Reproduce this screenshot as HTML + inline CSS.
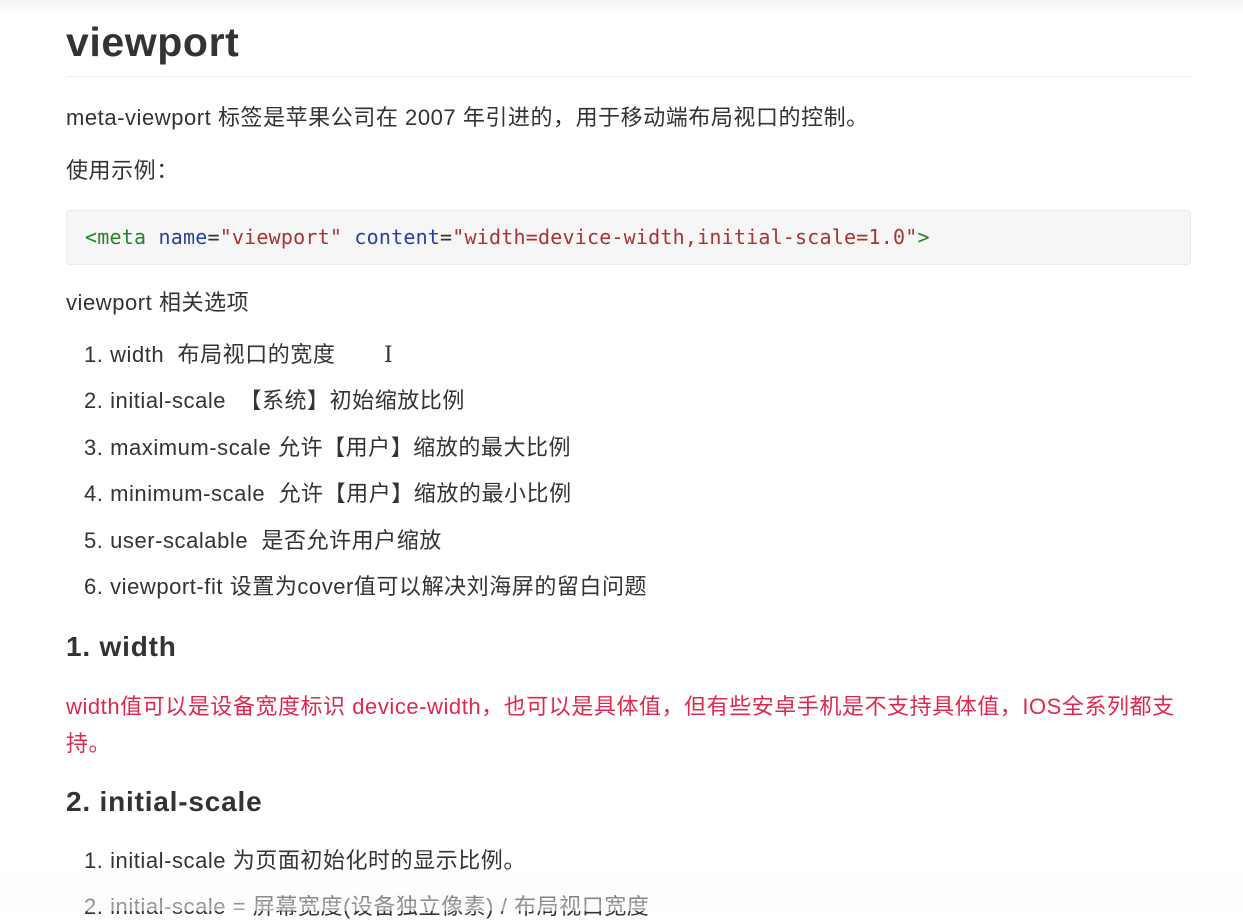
<!DOCTYPE html>
<html><head><meta charset="utf-8"><style>
body{margin:0;width:1243px;height:911px;background:#fff;overflow:hidden;position:relative;font-family:"Liberation Sans","Noto Sans CJK SC",sans-serif;color:#333;}
.t{position:absolute;left:66px;font-size:22px;white-space:nowrap;line-height:26px;letter-spacing:0.55px}
.li{left:84px}
h1{position:absolute;left:66px;top:17px;margin:0;font-size:41px;line-height:50px;font-weight:bold;color:#333;letter-spacing:0.6px}
.hr{position:absolute;left:66px;top:76px;width:1125px;height:1px;background:#eee}
.code{position:absolute;left:66px;top:210px;width:1123px;height:53px;background:#f6f6f6;border:1px solid #eaeaea;border-radius:3px}
.code span.c{position:absolute;left:18px;top:14px;font-family:"DejaVu Sans Mono","Liberation Mono",monospace;font-size:20px;white-space:nowrap;letter-spacing:0.2px}
.g{color:#2a7f2a}.b{color:#2a3f9f}.r{color:#a33}
h2{position:absolute;left:66px;margin:0;font-size:28px;font-weight:bold;line-height:34px;color:#333;letter-spacing:0.8px}
.red{color:#e0284f}
.fade{position:absolute;left:0;top:870px;width:1243px;height:41px;background:linear-gradient(rgba(255,255,255,0),rgba(250,250,250,.6))}
.top{position:absolute;left:0;top:0;width:1243px;height:12px;background:linear-gradient(#f2f2f2,#fff)}
</style></head><body>
<div class="top"></div>
<h1>viewport</h1>
<div class="hr"></div>
<div class="t" style="top:105px">meta-viewport 标签是苹果公司在 2007 年引进的，用于移动端布局视口的控制。</div>
<div class="t" style="top:158px">使用示例：</div>
<div class="code"><span class="c"><span class="g">&lt;meta</span> <span class="b">name</span>=<span class="r">"viewport"</span> <span class="b">content</span>=<span class="r">"width=device-width,initial-scale=1.0"</span><span class="g">&gt;</span></span></div>
<div class="t" style="top:290px">viewport 相关选项</div>
<div class="t li" style="top:342px">1. width &nbsp;布局视口的宽度</div>
<div class="t" style="top:343px;left:384px;font-size:22px;font-family:'DejaVu Serif',serif;font-weight:300">I</div>
<div class="t li" style="top:388px">2. initial-scale &nbsp;【系统】初始缩放比例</div>
<div class="t li" style="top:435px">3. maximum-scale 允许【用户】缩放的最大比例</div>
<div class="t li" style="top:481px">4. minimum-scale &nbsp;允许【用户】缩放的最小比例</div>
<div class="t li" style="top:528px">5. user-scalable &nbsp;是否允许用户缩放</div>
<div class="t li" style="top:574px">6. viewport-fit 设置为cover值可以解决刘海屏的留白问题</div>
<h2 style="top:630px">1. width</h2>
<div class="t red" style="top:694px">width值可以是设备宽度标识 device-width，也可以是具体值，但有些安卓手机是不支持具体值，IOS全系列都支</div>
<div class="t red" style="top:731px">持。</div>
<h2 style="top:785px">2. initial-scale</h2>
<div class="t li" style="top:848px">1. initial-scale 为页面初始化时的显示比例。</div>
<div class="t li" style="top:894px">2. initial-scale = 屏幕宽度(设备独立像素) / 布局视口宽度</div>
<div class="fade"></div>
</body></html>
